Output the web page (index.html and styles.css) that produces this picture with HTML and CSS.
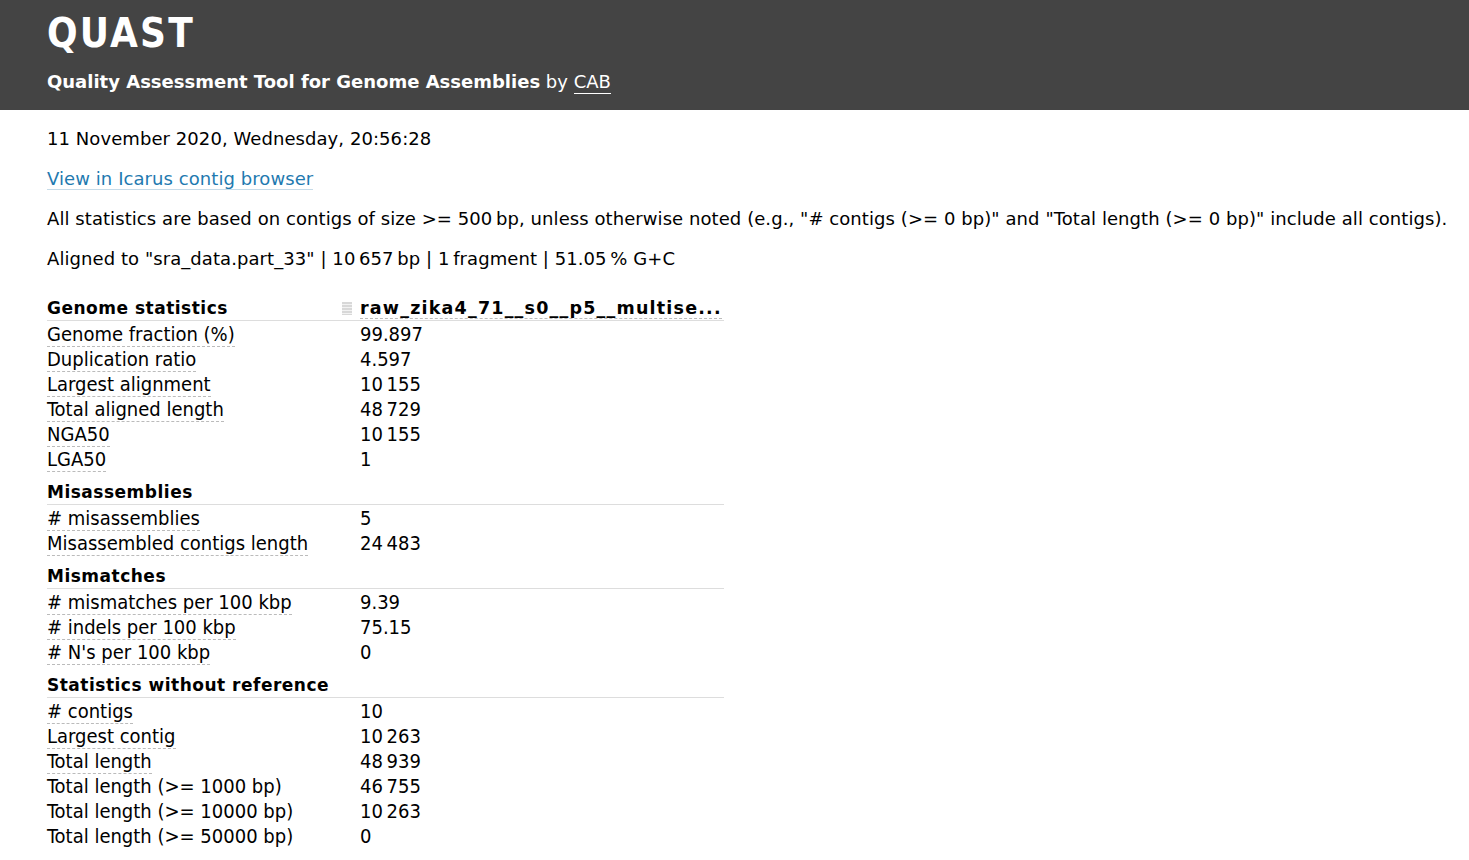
FILE: index.html
```html
<!DOCTYPE html>
<html>
<head>
<meta charset="utf-8">
<link rel="stylesheet" href="styles.css">
</head>
<body>
<div class="top">
  <div class="brand">QUAST</div>
  <div class="sub"><b>Quality Assessment Tool for Genome Assemblies</b> by <span class="cab">CAB</span></div>
</div>
<div class="content">
  <p class="line">11 November 2020, Wednesday, 20:56:28</p>
  <p class="line"><a class="link" href="#">View in Icarus contig browser</a></p>
  <p class="line">All statistics are based on contigs of size &gt;= 500&#8239;bp, unless otherwise noted (e.g., "# contigs (&gt;= 0 bp)" and "Total length (&gt;= 0 bp)" include all contigs).</p>
  <p class="line">Aligned to "sra_data.part_33" | 10&#8239;657&#8239;bp | 1&#8239;fragment | 51.05&#8239;% G+C</p>

  <table class="stats">
    <tr class="head">
      <td class="lbl"><span class="grp">Genome statistics</span></td>
      <td class="val"><span class="handle"></span><span class="asm">raw_zika4_71__s0__p5__multise...</span></td>
    </tr>
    <tr><td class="lbl"><span class="dl">Genome fraction (%)</span></td><td class="val">99.897</td></tr>
    <tr><td class="lbl"><span class="dl">Duplication ratio</span></td><td class="val">4.597</td></tr>
    <tr><td class="lbl"><span class="dl">Largest alignment</span></td><td class="val">10&#8239;155</td></tr>
    <tr><td class="lbl"><span class="dl">Total aligned length</span></td><td class="val">48&#8239;729</td></tr>
    <tr><td class="lbl"><span class="dl">NGA50</span></td><td class="val">10&#8239;155</td></tr>
    <tr><td class="lbl"><span class="dl">LGA50</span></td><td class="val">1</td></tr>
    <tr class="group"><td class="lbl" colspan="2"><span class="grp">Misassemblies</span></td></tr>
    <tr><td class="lbl"><span class="dl"># misassemblies</span></td><td class="val">5</td></tr>
    <tr><td class="lbl"><span class="dl">Misassembled contigs length</span></td><td class="val">24&#8239;483</td></tr>
    <tr class="group"><td class="lbl" colspan="2"><span class="grp">Mismatches</span></td></tr>
    <tr><td class="lbl"><span class="dl"># mismatches per 100 kbp</span></td><td class="val">9.39</td></tr>
    <tr><td class="lbl"><span class="dl"># indels per 100 kbp</span></td><td class="val">75.15</td></tr>
    <tr><td class="lbl"><span class="dl"># N's per 100 kbp</span></td><td class="val">0</td></tr>
    <tr class="group"><td class="lbl" colspan="2"><span class="grp">Statistics without reference</span></td></tr>
    <tr><td class="lbl"><span class="dl"># contigs</span></td><td class="val">10</td></tr>
    <tr><td class="lbl"><span class="dl">Largest contig</span></td><td class="val">10&#8239;263</td></tr>
    <tr><td class="lbl"><span class="dl">Total length</span></td><td class="val">48&#8239;939</td></tr>
    <tr><td class="lbl">Total length (&gt;= 1000 bp)</td><td class="val">46&#8239;755</td></tr>
    <tr><td class="lbl">Total length (&gt;= 10000 bp)</td><td class="val">10&#8239;263</td></tr>
    <tr><td class="lbl">Total length (&gt;= 50000 bp)</td><td class="val">0</td></tr>
  </table>
</div>
</body>
</html>
```

FILE: styles.css
```css
html, body {
  margin: 0;
  padding: 0;
  background: #fff;
  color: #000;
  font-family: "DejaVu Sans", Verdana, sans-serif;
}

.top {
  background: #444444;
  height: 110px;
  box-sizing: border-box;
  padding: 8px 0 0 47px;
  color: #fff;
}

.brand {
  font-family: "DejaVu Sans Condensed", "DejaVu Sans", sans-serif;
  font-weight: bold;
  font-size: 40px;
  line-height: 50px;
  letter-spacing: 2.2px;
}

.sub {
  font-family: "DejaVu Sans", sans-serif;
  font-size: 18px;
  line-height: 24px;
  margin-top: 12px;
}

.cab {
  border-bottom: 1px solid #fff;
  padding-bottom: 1px;
}

.content {
  padding: 0 0 0 47px;
}

.line {
  margin: 0;
  font-size: 18px;
  line-height: 40px;
  letter-spacing: 0.07px;
}

.line:first-child {
  margin-top: 9px;
}

.link {
  color: #1f7ab0;
  text-decoration: none;
  border-bottom: 1px solid #c6dbe8;
}

.stats {
  border-collapse: collapse;
  margin-top: 16px;
  width: 677px;
  font-family: "DejaVu Sans Condensed", "DejaVu Sans", sans-serif;
  font-size: 20px;
}

.stats td {
  padding: 1px 0 0 0;
  height: 24px;
  line-height: 24px;
  white-space: nowrap;
  vertical-align: top;
}

.stats td.lbl {
  width: 313px;
}

.head td {
  padding-top: 0;
  height: 24px;
  line-height: 24px;
  border-bottom: 1px solid #dddddd;
}

.group td {
  height: 24px;
  line-height: 24px;
  padding-top: 8px;
  border-bottom: 1px solid #dddddd;
}

.grp {
  font-weight: bold;
  font-family: "DejaVu Sans", sans-serif;
  font-size: 17px;
  letter-spacing: 0.5px;
}

.asm {
  font-family: "DejaVu Sans", sans-serif;
  font-weight: bold;
  font-size: 17.5px;
  letter-spacing: 1.2px;
  border-bottom: 1px dashed #bbbbbb;
}

.handle {
  display: inline-block;
  width: 10px;
  height: 13px;
  margin-left: -18px;
  margin-right: 8px;
  vertical-align: -1px;
  background: repeating-linear-gradient(to bottom, #d8d8d8 0 2px, #f2f2f2 2px 3px);
}

.dl {
  border-bottom: 1px dashed #bbbbbb;
}
```
